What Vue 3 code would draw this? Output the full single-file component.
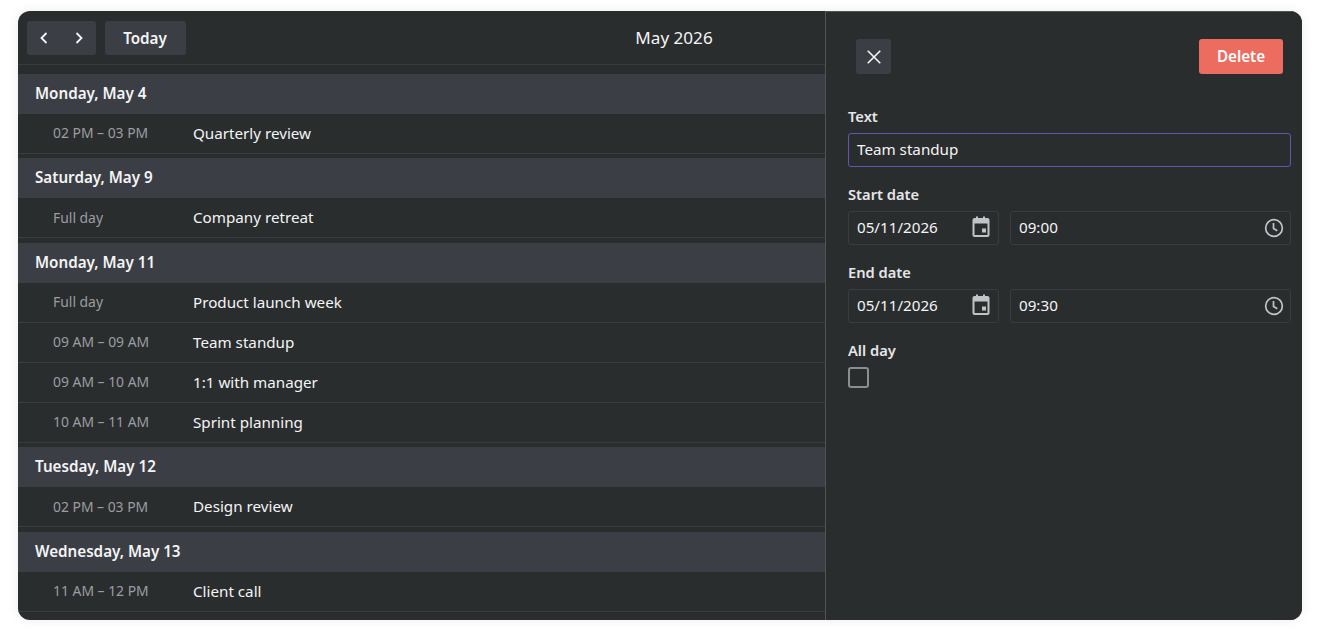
<script setup>
const days = [
  { label: 'Monday, May 4', events: [{ time: '02 PM – 03 PM', title: 'Quarterly review' }] },
  { label: 'Saturday, May 9', events: [{ time: 'Full day', title: 'Company retreat' }] },
  { label: 'Monday, May 11', events: [
    { time: 'Full day', title: 'Product launch week' },
    { time: '09 AM – 09 AM', title: 'Team standup' },
    { time: '09 AM – 10 AM', title: '1:1 with manager' },
    { time: '10 AM – 11 AM', title: 'Sprint planning' }
  ] },
  { label: 'Tuesday, May 12', events: [{ time: '02 PM – 03 PM', title: 'Design review' }] },
  { label: 'Wednesday, May 13', events: [{ time: '11 AM – 12 PM', title: 'Client call' }] }
]
const dateRows = [
  { label: 'Start date', date: '05/11/2026', time: '09:00' },
  { label: 'End date', date: '05/11/2026', time: '09:30' }
]
</script>

<template>
  <div class="page">
    <div class="card">
      <main class="main">
        <header class="toolbar">
          <div class="nav btn">
            <span class="nav-icon">
              <svg width="16" height="16" viewBox="0 0 16 16"><path d="M10.500 3 5.500 8l5 5" /></svg>
            </span>
            <span class="nav-icon">
              <svg width="16" height="16" viewBox="0 0 16 16"><path d="M5.500 3 10.500 8l-5 5" /></svg>
            </span>
          </div>
          <div class="btn today">Today</div>
          <div class="title">May 2026</div>
        </header>
        <div class="list">
          <section v-for="day in days" :key="day.label" class="day">
            <h2 class="day-head">{{ day.label }}</h2>
            <div v-for="ev in day.events" :key="ev.title" class="row">
              <span class="time">{{ ev.time }}</span>
              <span class="ev-title">{{ ev.title }}</span>
            </div>
          </section>
        </div>
      </main>
      <aside class="panel">
        <div class="panel-head">
          <div class="btn close">
            <svg width="16" height="16" viewBox="0 0 16 16"><path d="M1.750 1.750 14.250 14.250M14.250 1.750 1.750 14.250" /></svg>
          </div>
          <div class="delete">Delete</div>
        </div>
        <div class="field">
          <label class="label">Text</label>
          <div class="input focused"><span class="val">Team standup</span></div>
        </div>
        <div v-for="r in dateRows" :key="r.label" class="field">
          <label class="label">{{ r.label }}</label>
          <div class="pair">
            <div class="input date">
              <span class="val">{{ r.date }}</span>
              <svg class="ico" width="24" height="24" viewBox="0 1 24 24"><path fill-rule="evenodd" d="M17 3h-1V1.500h-2V3H9V1.500H7V3H5.500a2 2 0 0 0-2 2v15a2 2 0 0 0 2 2h13a2 2 0 0 0 2-2V5a2 2 0 0 0-2-2zM18.500 20h-13V8.500h13zM13 13.500h4v4h-4z" /></svg>
            </div>
            <div class="input time-input">
              <span class="val">{{ r.time }}</span>
              <svg class="ico" width="24" height="24" viewBox="0 0 24 24"><circle class="ring" cx="12" cy="12" r="8.350" /><path class="hand" d="M11.500 7v5.500l3.800 2.300" /></svg>
            </div>
          </div>
        </div>
        <div class="field">
          <label class="label">All day</label>
          <div class="check"></div>
        </div>
      </aside>
    </div>
  </div>
</template>

<style scoped>
.page {
  height: 634px;
  padding: 11px 18px 14px;
  box-sizing: border-box;
  background: #fff;
  font-family: "Noto Sans", sans-serif;
  font-size: 15.200px;
  color: #f4f4f5;
  overflow: hidden;
}
.card {
  display: flex;
  height: 609px;
  background: #2a2d2e;
  border-radius: 12px;
  overflow: hidden;
  box-shadow: 0 0 12px rgba(0, 0, 0, 0.08);
}
.main {
  flex: 1;
  min-width: 0;
  display: flex;
  flex-direction: column;
}
.toolbar {
  flex: none;
  height: 54px;
  display: flex;
  align-items: center;
  padding: 0 140px 0 9px;
  box-sizing: border-box;
  border-bottom: 1px solid #383b40;
  margin-right: -477px;
}
.btn {
  background: #3b3f45;
  border-radius: 3px;
}
.nav {
  width: 69px;
  height: 34px;
  display: flex;
  align-items: center;
}
.nav-icon {
  width: 34.500px;
  display: flex;
  justify-content: center;
}
.nav-icon svg path {
  fill: none;
  stroke: #f4f4f5;
  stroke-width: 1.800;
}
.today {
  margin-left: 9px;
  width: 80px;
  padding-right: 1px;
  height: 34px;
  line-height: 34px;
  text-align: center;
  font-weight: 600;
}
.title {
  flex: 1;
  text-align: center;
  font-size: 17.100px;
}
.list {
  flex: 1;
  padding-top: 8.500px;
  overflow: hidden;
}
.day {
  margin-bottom: 4.500px;
}
.day-head {
  margin: 0;
  height: 40px;
  line-height: 38px;
  padding-left: 17px;
  background: #3b3f45;
  font-size: 15.200px;
  font-weight: 600;
}
.row {
  height: 40px;
  display: flex;
  align-items: center;
  box-sizing: border-box;
  border-bottom: 1px solid #3a3c40;
  padding: 0 0 1px 35px;
}
.time {
  width: 140px;
  flex: none;
  font-size: 13.900px;
  color: #9c9ca2;
}
.panel {
  flex: none;
  position: relative;
  width: 477px;
  box-sizing: border-box;
  padding: 27px 11px 0 22px;
  background: #2a2d2e;
  border-left: 1px solid #505357;
  border-top: 1px solid #505357;
}
.panel-head {
  display: flex;
  justify-content: space-between;
  align-items: center;
  padding: 0 8px;
  margin-bottom: 31px;
}
.close {
  width: 35px;
  height: 35px;
  display: flex;
  align-items: center;
  justify-content: center;
}
.close path {
  fill: none;
  stroke: #f4f4f5;
  stroke-width: 1.600;
}
.delete {
  width: 84px;
  height: 35px;
  line-height: 35px;
  text-align: center;
  background: #ed6c60;
  border-radius: 3px;
  font-weight: 600;
  color: #fff;
}
.field {
  margin-bottom: 16px;
}
.label {
  display: block;
  height: 24px;
  line-height: 22px;
  margin-bottom: 4px;
  font-size: 14.700px;
  font-weight: 600;
  color: #e6e6e8;
}
.input {
  height: 34px;
  box-sizing: border-box;
  display: flex;
  align-items: center;
  justify-content: space-between;
  padding: 0 5px 0 8px;
  border: 1px solid #3a3c41;
  border-radius: 3px;
}
.val {
  padding-bottom: 2px;
}
.focused {
  border: 1.500px solid #6257b0;
}
.pair {
  display: flex;
  gap: 11px;
}
.date {
  width: 151px;
  flex: none;
}
.time-input {
  flex: 1;
  padding-right: 4px;
}
.ico {
  fill: #c2c3c9;
}
.ring,
.hand {
  fill: none;
  stroke: #c2c3c9;
  stroke-width: 1.700;
}
.check {
  width: 21px;
  height: 21px;
  box-sizing: border-box;
  border: 2px solid #8c8d93;
  border-radius: 3px;
}
</style>

<style>
html, body { background: #fff; }
</style>
